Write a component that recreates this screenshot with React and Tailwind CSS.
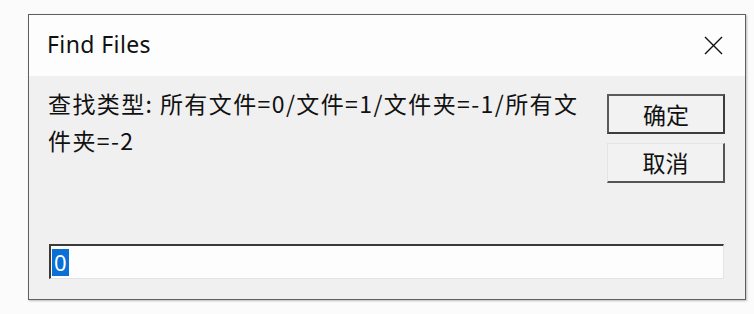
export default function App() {
  return (
    <div className="w-[754px] h-[314px] bg-[#fbfbfb] pt-[14px] pl-[28px]" style={{ fontFamily: '"Noto Sans", "Noto Sans CJK SC", sans-serif' }}>
      <div className="w-[718px] h-[286px] border border-[#5f5f5f] flex flex-col shadow-[1px_1px_2px_rgba(0,0,0,0.25)]">
        {/* title bar */}
        <div className="h-[61px] bg-[#fdfdfd] flex items-center justify-between pl-[18px] pr-[22px] shrink-0">
          <span className="text-[23px] text-[#111] tracking-[0.4px] pb-[2px]">Find Files</span>
          <svg width="19" height="19" viewBox="0 0 19 19">
            <path d="M1 1 L18 18 M18 1 L1 18" stroke="#111" strokeWidth="1.4" fill="none" />
          </svg>
        </div>

        {/* body */}
        <div className="flex-1 bg-[#f0f0f0] flex flex-col pl-[19px] pr-[20px]">
          <div className="flex justify-between pt-[17px]">
            <p className="w-[548px] -mt-[8px] text-[23px] leading-[37px] text-[#111] tracking-[1.4px]" style={{ fontFamily: '"Noto Sans CJK SC", sans-serif' }}>
              查找类型: 所有文件=0/文件=1/文件夹=-1/所有文件夹=-2
            </p>
            <div className="flex flex-col gap-[9px] pt-[1px]">
              <button className="w-[118px] h-[40px] bg-[#f2f2f2] border-2 border-[#5a5a5a] border-r-[#3c3c3c] border-b-[#3c3c3c] text-[23px] text-[#111] flex items-center justify-center" style={{ fontFamily: '"Noto Sans CJK SC", sans-serif' }}>
                确定
              </button>
              <button className="w-[118px] h-[40px] bg-[#f2f2f2] border border-[#e4e4e4] border-r-2 border-b-2 border-r-[#555] border-b-[#555] text-[23px] text-[#111] flex items-center justify-center" style={{ fontFamily: '"Noto Sans CJK SC", sans-serif' }}>
                取消
              </button>
            </div>
          </div>
          <div className="mt-auto mb-[20px] ml-[1px] mr-[1px]">
            <div className="h-[35px] bg-[#fdfdfd] border-2 border-[#3a3a3a] border-r-[#e4e4e4] border-b-[#e4e4e4] border-r border-b flex items-center pl-[1px]">
              <span className="bg-[#0a6fd6] text-white text-[22px] leading-[27px] px-[2px]">0</span>
            </div>
          </div>
        </div>
      </div>
    </div>
  );
}
